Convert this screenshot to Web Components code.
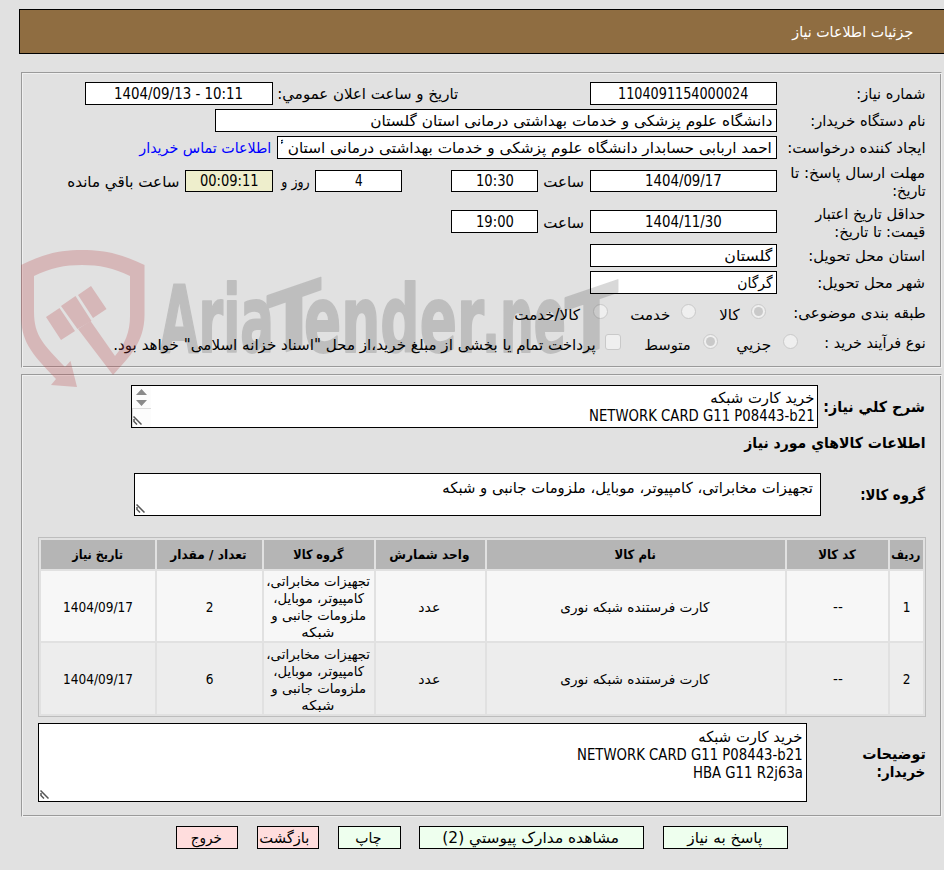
<!DOCTYPE html>
<html lang="fa">
<head>
<meta charset="utf-8">
<title>جزئیات اطلاعات نیاز</title>
<style>
    html, body {
        margin: 0;
        height: 870px;
        overflow: hidden;
        background: #e1e1e1;
    }

    body {
        position: relative;
        direction: rtl;
        font-family: "DejaVu Sans Condensed", "DejaVu Sans", sans-serif;
        font-size: 15px;
        line-height: 18px;
        color: #000;
    }
</style>
</head>
<body>
<page-header><fit-text w="121">جزئیات اطلاعات نیاز</fit-text></page-header>

<need-panel style="--height: 296px; margin-top: 18px">
    <need-row style="margin-top: 9px">
        <need-label><fit-text w="69">شماره نیاز:</fit-text></need-label>
        <need-field style="--w: 187px"><fit-text w="130" ltr>1104091154000024</fit-text></need-field>
        <fit-text w="181" style="margin-right: 131px">تاریخ و ساعت اعلان عمومي:</fit-text>
        <need-field style="--w: 188px; margin-right: 5px"><fit-text w="129" ltr>1404/09/13 - 10:11</fit-text></need-field>
    </need-row>
    <need-row style="margin-top: 4px">
        <need-label><fit-text w="115">نام دستگاه خریدار:</fit-text></need-label>
        <need-field start style="--w: 562px"><fit-text w="402">دانشگاه علوم پزشکی و خدمات بهداشتی درمانی استان گلستان</fit-text></need-field>
    </need-row>
    <need-row style="margin-top: 4px">
        <need-label><fit-text w="138">ایجاد کننده درخواست:</fit-text></need-label>
        <need-field start style="--w: 500px"><fit-text w="536">احمد اربابی حسابدار دانشگاه علوم پزشکی و خدمات بهداشتی درمانی استان گلستان</fit-text></need-field>
        <fit-text w="132" style="margin-right: 5px; color: #00f">اطلاعات تماس خریدار</fit-text>
    </need-row>
    <need-row style="--h: 34px; margin-top: 5px">
        <need-label style="margin-top: 2px"><fit-text w="135">مهلت ارسال پاسخ: تا</fit-text><fit-text w="33">تاریخ:</fit-text></need-label>
        <need-field style="--w: 187px; --h: 22px"><fit-text w="77" ltr>1404/09/17</fit-text></need-field>
        <fit-text w="41" style="margin: 2px 5px 0 0">ساعت</fit-text>
        <need-field style="--w: 87px; --h: 22px; margin-right: 6px"><fit-text w="38" ltr>10:30</fit-text></need-field>
        <need-field style="--w: 87px; --h: 22px; margin-right: 49px"><fit-text w="8" ltr>4</fit-text></need-field>
        <fit-text w="28" style="margin: 2px 5px 0 0">روز و</fit-text>
        <need-field style="--w: 88px; --h: 22px; --bg: #eeeecc; margin-right: 9px"><fit-text w="59" ltr>00:09:11</fit-text></need-field>
        <fit-text w="112" style="margin: 2px 5px 0 0">ساعت باقي مانده</fit-text>
    </need-row>
    <need-row style="--h: 35px; margin-top: 6px">
        <need-label style="margin-top: 2px"><fit-text w="110">حداقل تاریخ اعتبار</fit-text><fit-text w="91">قیمت: تا تاریخ:</fit-text></need-label>
        <need-field style="--w: 187px; --h: 23px"><fit-text w="77" ltr>1404/11/30</fit-text></need-field>
        <fit-text w="41" style="margin: 2px 5px 0 0">ساعت</fit-text>
        <need-field style="--w: 87px; --h: 23px; margin-right: 6px"><fit-text w="38" ltr>19:00</fit-text></need-field>
    </need-row>
    <need-row style="margin-top: 5px">
        <need-label><fit-text w="117">استان محل تحویل:</fit-text></need-label>
        <need-field start style="--w: 187px"><fit-text w="48">گلستان</fit-text></need-field>
    </need-row>
    <need-row style="margin-top: 4px">
        <need-label><fit-text w="108">شهر محل تحویل:</fit-text></need-label>
        <need-field start style="--w: 187px"><fit-text w="35">گرگان</fit-text></need-field>
    </need-row>
    <need-row style="margin-top: 7px">
        <need-label><fit-text w="132">طبقه بندی موضوعی:</fit-text></need-label>
        <need-check checked style="margin-right: 11px"></need-check>
        <fit-text w="20" style="margin: 4px 11px 0 0">کالا</fit-text>
        <need-check style="margin-right: 24px"></need-check>
        <fit-text w="40" style="margin: 4px 10px 0 0">خدمت</fit-text>
        <need-check style="margin-right: 23px"></need-check>
        <fit-text w="66" style="margin: 4px 12px 0 0">کالا/خدمت</fit-text>
    </need-row>
    <need-row style="margin-top: 7px">
        <need-label style="--w: 128px"><fit-text w="101">نوع فرآیند خرید :</fit-text></need-label>
        <need-check></need-check>
        <fit-text w="35" style="margin: 4px 11px 0 0">جزيي</fit-text>
        <need-check checked style="margin-right: 19px"></need-check>
        <fit-text w="46" style="margin: 4px 12px 0 0">متوسط</fit-text>
        <need-check box style="margin-right: 24px"></need-check>
        <fit-text w="482" style="margin: 4px 9px 0 0">پرداخت تمام یا بخشی از مبلغ خرید،از محل "اسناد خزانه اسلامی" خواهد بود.</fit-text>
    </need-row>
</need-panel>

<need-panel style="--height: 443px; margin-top: 6px">
    <need-row style="--h: 43px; margin-top: 10px">
        <need-label bold style="--w: 108px"><fit-text w="102">شرح کلي نیاز:</fit-text></need-label>
        <need-area scroll style="--w: 687px; --h: 43px; --pad: 3px 2px">
            <fit-text w="104">خرید کارت شبکه</fit-text>
            <fit-text w="226" ltr>NETWORK CARD G11 P08443-b21</fit-text>
        </need-area>
    </need-row>
    <need-row style="--h: 18px; margin-top: 6px">
        <need-label bold style="--w: 300px"><fit-text w="181">اطلاعات کالاهاي مورد نیاز</fit-text></need-label>
    </need-row>
    <need-row style="--h: 43px; margin-top: 21px">
        <need-label bold style="--w: 105px"><fit-text w="65">گروه کالا:</fit-text></need-label>
        <need-area style="--w: 687px; --h: 43px; --pad: 5px 6px"><fit-text w="371">تجهیزات مخابراتی، کامپیوتر، موبایل، ملزومات جانبی و شبکه</fit-text></need-area>
    </need-row>
    <goods-table></goods-table>
    <need-row style="--h: 79px; margin-top: 6px">
        <need-label bold style="--w: 119px"><fit-text w="63">توضیحات</fit-text><fit-text w="49">خریدار:</fit-text></need-label>
        <need-area style="--w: 769px; --h: 79px; --pad: 4px 3px">
            <fit-text w="104">خرید کارت شبکه</fit-text>
            <fit-text w="226" ltr>NETWORK CARD G11 P08443-b21</fit-text>
            <fit-text w="110" ltr>HBA G11 R2j63a</fit-text>
        </need-area>
    </need-row>
</need-panel>

<button-bar>
    <need-button style="--w: 125px"><fit-text w="75">پاسخ به نیاز</fit-text></need-button>
    <need-button style="--w: 225px"><fit-text w="177">مشاهده مدارک پیوستي (2)</fit-text></need-button>
    <need-button style="--w: 63px"><fit-text w="26">چاپ</fit-text></need-button>
    <need-button danger tight style="--w: 62px"><fit-text w="50">بازگشت</fit-text></need-button>
    <need-button danger style="--w: 62px"><fit-text w="31">خروج</fit-text></need-button>
</button-bar>

<brand-mark></brand-mark>

<script>
// small helper: attach the shadow root and fill it
class NeedElement extends HTMLElement {
    constructor() {
        super();
        this.attachShadow({ mode: 'open' });
    }

    connectedCallback() {
        this.shadowRoot.innerHTML = this.render();
    }
}

class PageHeader extends NeedElement {
    render() {
        return `
        <style>
            :host {
                display: flex;
                align-items: center;
                box-sizing: border-box;
                height: 45px;
                margin: 9px 0 0 19px;
                padding-right: 30px;
                border: 1px solid #000;
                border-right: 0;
                background: #8f6d41;
                color: #fff;
            }
        </style>
        <slot></slot>`;
    }
}

class NeedPanel extends NeedElement {
    render() {
        return `
        <style>
            :host {
                display: flex;
                flex-direction: column;
                box-sizing: border-box;
                width: 921px;
                height: var(--height);
                margin-right: 2px;
                padding: 0 15px 0 16px;
                border: 1px solid #9a9a9a;
                border-right-color: #f0f0f0;
                border-bottom-color: #f0f0f0;
                box-shadow: inset 1px 1px #f0f0f0, inset -1px -1px #9a9a9a;
            }
        </style>
        <slot></slot>`;
    }
}

class NeedRow extends NeedElement {
    render() {
        return `
        <style>
            :host {
                display: flex;
                align-items: center;
                flex: none;
                height: var(--h, 23px);
            }
            ::slotted(*) { flex: none; }
        </style>
        <slot></slot>`;
    }
}

class NeedLabel extends NeedElement {
    render() {
        return `
        <style>
            :host {
                display: flex;
                flex-direction: column;
                align-items: flex-start;
                width: var(--w, 149px);
            }
            :host([bold]) { font-weight: bold; }
        </style>
        <slot></slot>`;
    }
}

class NeedField extends NeedElement {
    render() {
        return `
        <style>
            :host {
                display: flex;
                justify-content: center;
                align-items: center;
                box-sizing: border-box;
                width: var(--w);
                height: var(--h, 23px);
                padding: 0 3px;
                border: 1px solid #000;
                background: var(--bg, #fff);
            }
            :host([start]) { justify-content: flex-start; }
            div { display: flex; overflow: hidden; }
        </style>
        <div><slot></slot></div>`;
    }
}

class NeedArea extends NeedElement {
    render() {
        const bar = `
        <svg class="bar" width="19" height="41" viewBox="0 0 19 41">
            <path d="M0 0h19v41H0z" fill="#fcfcfc"/>
            <path d="M4 9l5.500-6 5.500 6zM4 14l5.500 6 5.500-6z" fill="#8a8a8a"/>
            <path d="M0 22.500h19M.5 22v19" stroke="#dcdcdc" fill="none"/>
        </svg>`;
        return `
        <style>
            :host {
                display: flex;
                position: relative;
                box-sizing: border-box;
                width: var(--w);
                height: var(--h);
                border: 1px solid #000;
                background: #fff;
            }
            .text {
                display: flex;
                flex-direction: column;
                align-items: flex-start;
                flex: 1;
                padding: var(--pad);
            }
            .bar { flex: none; }
            .grip { position: absolute; left: 1px; bottom: 2px; }
        </style>
        <div class="text"><slot></slot></div>
        ${this.hasAttribute('scroll') ? bar : ''}
        <svg class="grip" width="9" height="9" viewBox="0 0 9 9">
            <path d="M.5.5l8 8M.5 5l3.500 3.500M1 3v3" stroke="#555" stroke-width="1.500"/>
        </svg>`;
    }
}

class NeedCheck extends NeedElement {
    render() {
        return `
        <style>
            :host {
                display: flex;
                justify-content: center;
                align-items: center;
                box-sizing: border-box;
                width: 15px;
                height: 15px;
                margin-top: -2px;
                border: 1px solid #c9c9c9;
                border-radius: 50%;
                background: #efefef;
            }
            :host([box]) { width: 16px; height: 16px; border-radius: 3px; }
            i { width: 9px; height: 9px; border-radius: 50%; background: #c9c9c9; }
        </style>
        ${this.hasAttribute('checked') ? '<i></i>' : ''}`;
    }
}

class GoodsTable extends NeedElement {
    render() {
        const head = [['ردیف', 29], ['کد کالا', 38], ['نام کالا', 41], ['واحد شمارش', 80], ['گروه کالا', 50], ['تعداد / مقدار', 76], ['تاریخ نیاز', 51]];
        const group = [['تجهیزات مخابراتی،', 104], ['کامپیوتر، موبایل،', 91], ['ملزومات جانبی و', 95], ['شبکه', 33]];
        const rows = [['1', '2'], ['2', '6']];
        const text = ([label, w]) => `<fit-text w="${w}">${label}</fit-text>`;
        const body = rows.map(([index, count]) => [
            `<fit-text w="8" ltr>${index}</fit-text>`,
            '<fit-text w="10" ltr>--</fit-text>',
            text(['کارت فرستنده شبکه نوری', 149]),
            text(['عدد', 22]),
            group.map(text).join(''),
            `<fit-text w="8" ltr>${count}</fit-text>`,
            '<fit-text w="70" ltr>1404/09/17</fit-text>'
        ].map(cell => `<div class="cell">${cell}</div>`).join('')).join('');
        return `
        <style>
            :host {
                display: grid;
                grid-template-columns: 33px 101px 298px 109px 110px 105px 114px;
                grid-template-rows: 29px 70px 71px;
                gap: 2px;
                margin-top: 21px;
                padding: 2px;
                border: 1px solid #bdbdbd;
                font-size: 13.500px;
                line-height: 17px;
            }
            .head, .cell {
                display: flex;
                flex-direction: column;
                justify-content: center;
                align-items: center;
                background: #ededed;
            }
            .head { background: #b5b5b5; font-size: 13px; font-weight: bold; }
            .cell { box-sizing: border-box; padding-top: 2px; }
            .cell:nth-of-type(-n + 14) { background: #f7f7f7; }
        </style>
        ${head.map(cell => `<div class="head">${text(cell)}</div>`).join('')}
        ${body}`;
    }
}

class ButtonBar extends NeedElement {
    render() {
        return `
        <style>
            :host { display: flex; margin-top: 9px; padding-right: 156px; }
            ::slotted(*) { margin-right: 19px; }
            ::slotted(:first-child) { margin-right: 0; }
            ::slotted(:nth-child(3)) { margin-right: 18px; }
        </style>
        <slot></slot>`;
    }
}

class NeedButton extends NeedElement {
    render() {
        return `
        <style>
            :host {
                display: flex;
                justify-content: center;
                align-items: center;
                box-sizing: border-box;
                width: var(--w);
                height: 23px;
                border: 1px solid #000;
                background: #eeffee;
            }
            :host([danger]) { background: #ffdddd; }
            :host([tight]) { padding-right: 5px; }
        </style>
        <slot></slot>`;
    }
}

// translucent shield and site name lying over the form
class BrandMark extends NeedElement {
    render() {
        return `
        <style>
            :host {
                position: absolute;
                left: 0;
                top: 240px;
                pointer-events: none;
            }
            svg { display: block; direction: ltr; }
            text { font: bold 72px "DejaVu Sans Condensed", "DejaVu Sans", sans-serif; }
        </style>
        <svg width="640" height="160" viewBox="0 240 640 160">
            <g fill="#b93c41" opacity=".25">
                <path d="M21 265C45 253 62 250 82 250s38 3 62.500 15v50c0 27-15 42-31.500 60L78 329l12.500-8L115 356c10-12 15-24 15-40v-40c-16-8-31-11-48-11s-32 3-48 11v36c0 24 10 33 31 55l5.500-6 6.500 26-26-2 5-6C30 352 21 341 21 314z"/>
                <path d="M46 317l13.500-9L75 331l-14 9zM61 306l14.500-10L91.500 321l-14 8zM78 295l13-9 15.500 23-13.500 9z"/>
            </g>
            <g fill="#000" stroke="#000" stroke-width="1.500" stroke-linejoin="round" opacity=".15">
                <text transform="translate(160 352) scale(1 1.290)" textLength="114" lengthAdjust="spacingAndGlyphs">Aria</text>
                <text transform="translate(267 358) skewY(-19) scale(1 1.180)" textLength="54" lengthAdjust="spacingAndGlyphs">T</text>
                <text transform="translate(304 352) scale(1 1.290)" textLength="180" lengthAdjust="spacingAndGlyphs">ender</text>
                <text transform="translate(482 352) scale(1 1.290)" textLength="84" lengthAdjust="spacingAndGlyphs">.ne</text>
                <text transform="translate(565 360) skewY(-19) scale(1 1.180)" textLength="53" lengthAdjust="spacingAndGlyphs">T</text>
            </g>
        </svg>`;
    }
}

// one line of text squeezed or stretched to the width in its "w" attribute
class FitText extends NeedElement {
    connectedCallback() {
        super.connectedCallback();
        const span = this.shadowRoot.querySelector('span');
        const natural = span.offsetWidth;
        const shift = this.hasAttribute('ltr') ? 0 : -0.7;
        if (natural) {
            span.style.transform = `translateX(${shift}px) scaleX(${this.getAttribute('w') / natural})`;
        }
    }

    render() {
        return `
        <style>
            :host {
                display: block;
                flex: none;
                width: ${this.getAttribute('w')}px;
                white-space: nowrap;
            }
            span { display: inline-block; vertical-align: top; transform-origin: 100% 50%; }
            :host([ltr]) span { direction: ltr; }
        </style>
        <span><slot></slot></span>`;
    }
}

customElements.define('page-header', PageHeader);
customElements.define('need-panel', NeedPanel);
customElements.define('need-row', NeedRow);
customElements.define('need-label', NeedLabel);
customElements.define('need-field', NeedField);
customElements.define('need-area', NeedArea);
customElements.define('need-check', NeedCheck);
customElements.define('goods-table', GoodsTable);
customElements.define('button-bar', ButtonBar);
customElements.define('need-button', NeedButton);
customElements.define('brand-mark', BrandMark);
customElements.define('fit-text', FitText);
</script>
</body>
</html>
